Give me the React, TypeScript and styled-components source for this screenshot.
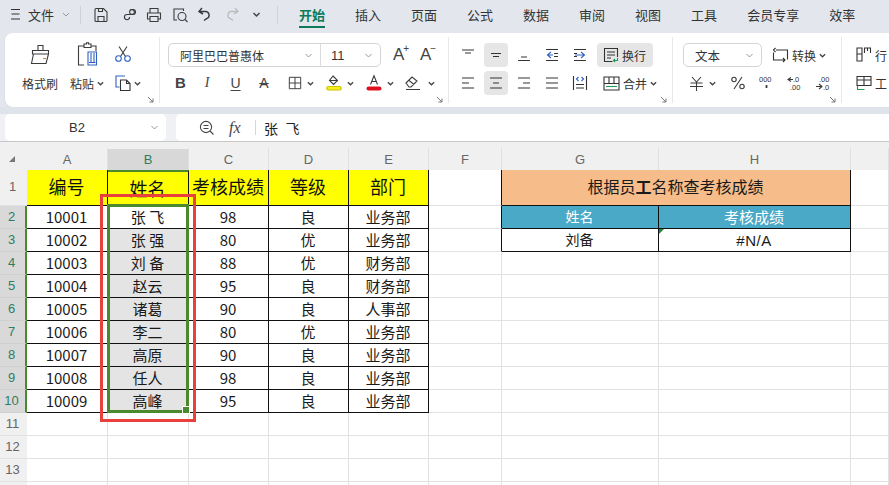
import React from "react";
import styled, { createGlobalStyle } from "styled-components";

const CJK = `"Noto Sans CJK SC", "Noto Sans", sans-serif`;
const GREEN = "#4a8a2c";

const Global = createGlobalStyle`
  html, body { margin: 0; padding: 0; background: #fff; }
  body { font-family: ${CJK}; overflow: hidden; }
`;

const Page = styled.div`
  width: 889px; height: 485px; overflow: hidden; background: #e3e7ed;
  display: flex; flex-direction: column;
`;

/* ---------- top bar ---------- */
const TopBar = styled.div`
  height: 33px; flex: none; display: flex; align-items: center; color: #333; font-size: 13px;
  padding-bottom: 4px; box-sizing: border-box;
`;
const MenuButton = styled.div`
  display: flex; align-items: center; margin-left: 11px; width: 69px; flex: none;
`;
const MenuLabel = styled.span`
  margin-left: 8px; margin-right: 8px; line-height: 1;
`;
const BarDivider = styled.div`
  width: 1px; height: 18px; background: #cfd3d9; flex: none;
`;
const QuickTools = styled.div`
  display: flex; align-items: center; margin-left: 12px;
`;
const QuickSlot = styled.div<{ $w: number; $c?: string }>`
  width: ${p => p.$w}px; display: flex; align-items: center; color: ${p => p.$c || "#3c3c3c"}; flex: none;
`;
const Tabs = styled.div`
  display: flex; gap: 30px; margin-left: 21px; flex: none;
`;
const Tab = styled.div<{ $on?: boolean }>`
  position: relative; line-height: 20px; color: ${p => (p.$on ? "#0f7a58" : "#333")};
  font-weight: ${p => (p.$on ? 700 : 400)}; white-space: nowrap;
  ${p => p.$on && `&::after { content: ""; position: absolute; left: 0; right: 0; bottom: -3px; height: 2px; background: #0f7a58; }`}
`;

/* ---------- ribbon ---------- */
const Ribbon = styled.div`
  height: 74px; flex: none; margin-left: 5px; background: #fff; border-radius: 8px 0 0 8px;
  padding: 4px 0; box-sizing: border-box; display: flex; box-shadow: 0 1px 2px rgba(0,0,0,.08);
`;
const Group = styled.div<{ $w: number; $pl: number; $last?: boolean }>`
  position: relative; width: ${p => p.$w}px; flex: none; box-sizing: border-box; padding: 6px 0 0 ${p => p.$pl}px;
  border-right: ${p => (p.$last ? "none" : "1px solid #e8e8e8")};
  display: flex; flex-direction: column; gap: 4px; overflow: hidden;
`;
const ToolRow = styled.div<{ $gap?: number }>`
  height: 24px; display: flex; align-items: center; gap: ${p => p.$gap || 0}px; color: #3c3c3c; font-size: 12px;
`;
const Corner = styled.svg`
  position: absolute; right: 5px; bottom: 0; width: 7px; height: 7px; stroke: #777; fill: none;
`;
const ClipGrid = styled.div`
  display: grid; grid-template-columns: 46px 48px 34px; grid-template-rows: 24px 24px; row-gap: 4px;
  color: #3c3c3c; font-size: 12px; align-items: center; justify-items: center;
`;
const BigIcon = styled.div<{ $shift?: number }>`
  display: flex; justify-content: center; margin-right: ${p => p.$shift || 0}px; margin-top: -2px;
`;
const ClipLabel = styled.div`
  display: flex; align-items: center; gap: 3px; white-space: nowrap; font-size: 12px; color: #333;
`;
const Tool = styled.div<{ $w: number; $on?: boolean }>`
  width: ${p => p.$w}px; height: 24px; flex: none; display: flex; align-items: center; justify-content: center; gap: 5px;
  border-radius: 4px; background: ${p => (p.$on ? "#e6e6e6" : "transparent")};
`;
const LabeledTool = styled.div<{ $on?: boolean; $ml: number; $w?: number; $pl?: number }>`
  display: flex; align-items: center; gap: 3px; height: 24px; border-radius: 4px;
  margin-left: ${p => p.$ml}px; padding-left: ${p => p.$pl ?? 6}px; width: ${p => (p.$w ? p.$w + "px" : "auto")};
  box-sizing: border-box; white-space: nowrap; background: ${p => (p.$on ? "#e6e6e6" : "transparent")}; color: #333; font-size: 12px;
`;
const SelectBox = styled.div<{ $w: number }>`
  width: ${p => p.$w}px; height: 24px; box-sizing: border-box; border: 1px solid #d4d4d4; border-radius: 5px; flex: none;
  display: flex; align-items: center; color: #333; font-size: 12px;
`;
const SelectPart = styled.div<{ $w: number; $pl: number; $sep?: boolean; $font?: string; $size?: number }>`
  width: ${p => p.$w}px; height: 100%; box-sizing: border-box; padding-left: ${p => p.$pl}px; display: flex; align-items: center;
  justify-content: space-between; padding-right: 7px; flex: none; white-space: nowrap;
  border-right: ${p => (p.$sep ? "1px solid #dcdcdc" : "none")};
  font-family: ${p => p.$font || CJK}; font-size: ${p => p.$size || 12}px;
`;
const FontButton = styled.span`
  display: inline-flex; align-items: flex-start; font-family: "Liberation Sans", sans-serif; font-size: 17px; line-height: 20px; color: #444; width: 15px;
`;
const Sup = styled.span`
  font-size: 10px; line-height: 10px; color: #444; margin-left: -1px; margin-top: -1px; font-weight: 400;
`;
const StyleGlyph = styled.span<{ $kind: "b" | "i" | "u" | "s" }>`
  position: relative; font-size: ${p => (p.$kind === "b" ? 15 : 14)}px; line-height: 16px; color: #444;
  font-family: ${p => (p.$kind === "i" ? `"Liberation Serif", serif` : `"Liberation Sans", sans-serif`)};
  font-weight: ${p => (p.$kind === "b" ? 700 : 400)}; font-style: ${p => (p.$kind === "i" ? "italic" : "normal")};
  text-decoration: ${p => (p.$kind === "u" ? "underline" : p.$kind === "s" ? "line-through" : "none")};
  text-underline-offset: 2px;
`;

/* ---------- formula bar ---------- */
const Strip = styled.div`
  height: 7px; flex: none; background: #dfe3ea;
`;
const FormulaRow = styled.div`
  height: 27px; flex: none; display: flex; gap: 10px; padding-left: 5px; background: #eff1f4; border-bottom: 1px solid #c8c8c8;
`;
const NameBox = styled.div`
  width: 161px; box-sizing: border-box; background: #fff; border-radius: 5px; display: flex; align-items: center; padding: 0 7px 0 64px;
  justify-content: space-between; font-family: "Liberation Sans", sans-serif; font-size: 13px; color: #333; flex: none;
`;
const FormulaBox = styled.div`
  flex: 1; background: #fff; border-radius: 5px 0 0 5px; display: flex; align-items: center; padding-left: 23px; color: #444;
`;
const FxLabel = styled.span`
  font-family: "Liberation Serif", serif; font-style: italic; font-size: 16px; margin-left: 14px; width: 20px; color: #444; line-height: 1;
`;
const FormulaDivider = styled.div`
  width: 1px; height: 15px; background: #d6d6d6; margin: 0 8px 0 6px;
`;
const FormulaText = styled.span`
  font-size: 14px; color: #222; white-space: pre; letter-spacing: .4px;
`;

/* ---------- sheet ---------- */
const SheetWrap = styled.div`
  position: relative; flex: 1; background: #fff; overflow: hidden;
`;
const Sheet = styled.div`
  display: grid;
  grid-template-columns: 27px 81px 81px 80px 80px 80px 73px 157px 192px 38px;
  grid-template-rows: 28px 36px repeat(13, 23px);
`;
const Corner0 = styled.div`
  background: #f0f0f0; display: flex; align-items: center; justify-content: center; padding-top: 6px; box-sizing: border-box;
`;
const Tri = styled.div`
  width: 0; height: 0; border-left: 6px solid transparent; border-bottom: 6px solid #777; margin-left: -3px;
`;
const ColHead = styled.div<{ $on?: boolean }>`
  position: relative; box-sizing: border-box; display: flex; align-items: flex-end; justify-content: center; padding: 0 1px 2px 0;
  font-family: "Liberation Sans", sans-serif; font-size: 13px; line-height: 16px;
  color: ${p => (p.$on ? "#2f7d5d" : "#666")};
  background: ${p => (p.$on ? "linear-gradient(#f0f0f0 7px, #d8d8d8 7px)" : "#f0f0f0")};
  &::after { content: ""; position: absolute; right: 0; top: 6px; bottom: 0; width: 1px; background: #e0e0e0; }
`;
const RowHead = styled.div<{ $on?: boolean }>`
  box-sizing: border-box; display: flex; align-items: center; justify-content: center; padding: 0 2px 2px 0;
  font-family: "Liberation Sans", sans-serif; font-size: 13px;
  color: ${p => (p.$on ? "#2f7d5d" : "#666")};
  background: ${p => (p.$on ? "#d9d9d9" : "#f0f0f0")};
  border-bottom: 1px solid ${p => (p.$on ? "#d0d0d0" : "#e2e2e2")};
  border-right: ${p => (p.$on ? `2px solid ${GREEN}` : "none")};
`;
type CellProps = { $bg?: string; $fg?: string; $size?: number; $right?: string; $bottom?: string; $span?: number; $top?: string; $latin?: boolean; $pb?: number };
const Cell = styled.div<CellProps>`
  position: relative; box-sizing: border-box; display: flex; align-items: center; justify-content: center; white-space: pre; overflow: hidden;
  grid-column: span ${p => p.$span || 1};
  padding: 0 1px ${p => p.$pb ?? 2}px 0;
  font-family: ${p => (p.$latin ? `"Liberation Sans", sans-serif` : CJK)};
  letter-spacing: ${p => (p.$latin ? ".5px" : "0")};
  background: ${p => p.$bg || "#fff"}; color: ${p => p.$fg || "#1a1a1a"}; font-size: ${p => p.$size || 15}px;
  border-right: 1px solid ${p => p.$right || "#e2e2e2"}; border-bottom: 1px solid ${p => p.$bottom || "#e2e2e2"};
  ${p => p.$top ? `border-top: 2px solid ${p.$top};` : ""}
`;
const BoldChar = styled.b`
  font-weight: 700;
`;
const ErrorMark = styled.span`
  position: absolute; left: 0; top: 0; width: 0; height: 0; border-top: 5px solid #1f8a3a; border-right: 5px solid transparent;
`;
const Selection = styled.div`
  position: absolute; left: 107px; top: 62px; width: 82px; height: 209px; box-sizing: border-box; border: 3px solid ${GREEN}; pointer-events: none;
`;
const Handle = styled.div`
  position: absolute; right: -3px; bottom: -3px; width: 6px; height: 6px; background: ${GREEN}; outline: 1px solid #fff;
`;
const RedBox = styled.div`
  position: absolute; left: 100px; top: 52px; width: 96px; height: 228px; box-sizing: border-box; border: 3px solid #e8403a; pointer-events: none;
`;

/* ---------- icons ---------- */
const Svg = styled.svg`
  display: block; flex: none; fill: none; stroke: currentColor; stroke-width: 1.1; overflow: visible;
`;
const Chev = ({ w = 8, soft = false }: { w?: number; soft?: boolean }) => (
  <Svg width={w} height={5} viewBox="0 0 8 5">
    <path d="M1 1l3 3 3-3" stroke={soft ? "#999" : "#444"} strokeWidth={soft ? 1 : 1.5} />
  </Svg>
);
const I16 = ({ children, s = 16 }: { children: React.ReactNode; s?: number }) => (
  <Svg width={s} height={s} viewBox="0 0 16 16">{children}</Svg>
);
const Lines = ({ d, blue }: { d: string; blue?: string }) => (
  <I16><path d={d} stroke="#333" />{blue && <path d={blue} stroke="#2f62c0" />}</I16>
);
const CornerMark = () => (
  <Corner viewBox="0 0 7 7"><path d="M1 1l5 5M6 2.5V6H2.5" /></Corner>
);
const SmallNum = styled.text`
  font-family: "Liberation Sans", sans-serif; font-size: 7.5px; fill: #333; stroke: none;
`;

const rows = [
  ["10001", "张 飞", "98", "良", "业务部"],
  ["10002", "张 强", "80", "优", "业务部"],
  ["10003", "刘 备", "88", "优", "财务部"],
  ["10004", "赵云", "95", "良", "财务部"],
  ["10005", "诸葛", "90", "良", "人事部"],
  ["10006", "李二", "80", "优", "业务部"],
  ["10007", "高原", "90", "良", "业务部"],
  ["10008", "任人", "98", "良", "业务部"],
  ["10009", "高峰", "95", "良", "业务部"],
];
const heads = ["编号", "姓名", "考核成绩", "等级", "部门"];
const cols = ["A", "B", "C", "D", "E", "F", "G", "H", ""];
const tabs = ["插入", "页面", "公式", "数据", "审阅", "视图", "工具", "会员专享", "效率"];
const BLACK = "#111";

function SheetRows() {
  const out: React.ReactNode[] = [];
  for (let r = 1; r <= 14; r++) {
    const sel = r >= 2 && r <= 10;
    out.push(<RowHead key={`h${r}`} $on={sel}>{r < 14 ? r : ""}</RowHead>);
    if (r === 1) {
      heads.forEach((h, i) => (
        out.push(<Cell key={`t${i}`} $bg="#ffff00" $fg="#111" $size={18} $pb={i === 1 ? 2 : 4} $right={BLACK} $bottom={BLACK} $top={i === 1 ? GREEN : undefined}>{h}</Cell>)
      ));
    } else if (sel) {
      rows[r - 2].forEach((v, i) => (
        out.push(<Cell key={`${r}-${i}`} $bg={i === 1 && r > 2 ? "#e4e4e4" : "#fff"} $right={BLACK} $bottom={BLACK}>{v}</Cell>)
      ));
    } else {
      for (let i = 0; i < 5; i++) out.push(<Cell key={`${r}-${i}`} />);
    }
    out.push(<Cell key={`f${r}`} $right={r <= 3 ? BLACK : undefined} />);
    if (r === 1) {
      out.push(<Cell key="title" $span={2} $bg="#f6bd8a" $size={16} $pb={4} $right={BLACK} $bottom={BLACK}>根据员<BoldChar>工</BoldChar>名称查考核成绩</Cell>);
    } else if (r === 2) {
      out.push(<Cell key="g2" $bg="#4aa9c6" $fg="#fff" $size={14} $right={BLACK} $bottom={BLACK}>姓名</Cell>);
      out.push(<Cell key="h2" $bg="#4aa9c6" $fg="#fff" $size={15} $right={BLACK} $bottom={BLACK}>考核成绩</Cell>);
    } else if (r === 3) {
      out.push(<Cell key="g3" $size={14} $right={BLACK} $bottom={BLACK}>刘备</Cell>);
      out.push(<Cell key="h3" $size={15} $pb={0} $latin $right={BLACK} $bottom={BLACK}><ErrorMark />#N/A</Cell>);
    } else {
      out.push(<Cell key={`g${r}`} />);
      out.push(<Cell key={`hh${r}`} />);
    }
    out.push(<Cell key={`i${r}`} />);
  }
  return <>{out}</>;
}

export default function App() {
  return (
    <Page>
      <Global />
      <TopBar>
        <MenuButton>
          <Svg width={9} height={11} viewBox="0 0 9 11" stroke="#333"><path d="M0 .5h9M.5 5h8M0 10h9" /></Svg>
          <MenuLabel>文件</MenuLabel>
          <Chev soft />
        </MenuButton>
        <BarDivider />
        <QuickTools>
          <QuickSlot $w={29}><I16><path d="M3 1.5h7.5L14 5v8.5a1 1 0 0 1-1 1H3a1 1 0 0 1-1-1v-11a1 1 0 0 1 1-1zM5 14.5V9.5h6v5M5.5 1.5v3h4v-3" /></I16></QuickSlot>
          <QuickSlot $w={24}><I16><path d="M8.5 2.5h2.5a2.5 2.5 0 0 1 0 5H5a2.6 2.6 0 0 0 0 5.2c1.5 0 2.6-1 2.6-2.6" /><circle cx="10" cy="5" r="2.4" /></I16></QuickSlot>
          <QuickSlot $w={26}><I16><path d="M4 6V1.5h8V6M4 12H1.5V6h13v6H12M4 9.5h8v5H4z" /></I16></QuickSlot>
          <QuickSlot $w={25}><I16><path d="M6 2H2v11h3M2 2h9.5v2" /><circle cx="10" cy="9.5" r="4" /><path d="M13 12.5l2.5 2.5" /></I16></QuickSlot>
          <QuickSlot $w={29}><Svg width={14} height={15} viewBox="0 0 14 15"><path strokeWidth={1.5} d="M5 1L2 4.5 6 7M2.5 4.5H8a3.7 3.7 0 0 1 1.5 7.2L7 13.5" /></Svg></QuickSlot>
          <QuickSlot $w={25} $c="#bcbcbc"><Svg width={14} height={15} viewBox="0 0 14 15"><path strokeWidth={1.3} d="M9 1l3 3.5-4 2.5M11.5 4.5H6a3.7 3.7 0 0 0-1.5 7.2L7 13.5" /></Svg></QuickSlot>
          <QuickSlot $w={26}><Chev w={11} /></QuickSlot>
        </QuickTools>
        <BarDivider />
        <Tabs>
          <Tab $on>开始</Tab>
          {tabs.map(t => <Tab key={t}>{t}</Tab>)}
        </Tabs>
      </TopBar>

      <Ribbon>
        <Group $w={155} $pl={12}>
          <ClipGrid>
            <BigIcon>
              <Svg width={21} height={21} viewBox="0 0 21 21"><path d="M8 6V1.5h5V6M2.5 6.5h16V10h-16zM3.5 10L1.5 19.5h14.5l2.5-9.5" /><path d="M13 14.5h3" stroke="#d9862a" /></Svg>
            </BigIcon>
            <BigIcon>
              <Svg width={21} height={25} viewBox="0 0 21 25"><path d="M7 4H1.5v19H7M14 4h5v5M7 4V2h2.5V.8h2V2H14v3.5H7z" /><path d="M11 10h8.5v13H11zM12 20.5h6.5M14 11v9M17 11v9" stroke="#2f62c0" /></Svg>
            </BigIcon>
            <BigIcon $shift={10}>
              <Svg width={16} height={16} viewBox="0 0 16 16"><path d="M5.5 10.5L12 .5M10.5 10.5L4 .5" /><circle cx="3.5" cy="12.5" r="2.8" stroke="#2f62c0" /><circle cx="12.5" cy="12.5" r="2.8" stroke="#2f62c0" /></Svg>
            </BigIcon>
            <ClipLabel>格式刷</ClipLabel>
            <ClipLabel>粘贴<Chev w={7} /></ClipLabel>
            <ClipLabel>
              <Svg width={16} height={16} viewBox="0 0 16 16"><path d="M6 1H1v11h3.5M6 1h4" stroke="#2f62c0" /><path d="M5.5 5h6l3.5 3.5V15.5H5.5zM11.5 5v3.5H15" /></Svg>
              <Chev w={7} />
            </ClipLabel>
          </ClipGrid>
          <CornerMark />
        </Group>

        <Group $w={289} $pl={8}>
          <ToolRow $gap={12}>
            <SelectBox $w={213}>
              <SelectPart $w={152} $pl={11} $sep>阿里巴巴普惠体<Chev w={9} soft /></SelectPart>
              <SelectPart $w={59} $pl={10} $size={13} $font={`"Liberation Sans", sans-serif`}>11<Chev w={9} soft /></SelectPart>
            </SelectBox>
            <FontButton>A<Sup>+</Sup></FontButton>
            <FontButton>A<Sup>−</Sup></FontButton>
          </ToolRow>
          <ToolRow>
            <Tool $w={25}><StyleGlyph $kind="b">B</StyleGlyph></Tool>
            <Tool $w={28}><StyleGlyph $kind="i">I</StyleGlyph></Tool>
            <Tool $w={29}><StyleGlyph $kind="u">U</StyleGlyph></Tool>
            <Tool $w={28}><StyleGlyph $kind="s">A</StyleGlyph></Tool>
            <Tool $w={46}><I16 s={14}><path d="M1.5 1.5h13v13h-13zM8 1.5v13M1.5 8h13" /></I16><Chev w={7} /></Tool>
            <Tool $w={32}>
              <Svg width={16} height={16} viewBox="0 0 16 16"><path d="M7 1l4.5 4.5L7.5 9.5 3.5 5.5zM3.5 5.5h8" /><rect x=".7" y="11.5" width="14.6" height="3.5" rx="1.7" fill="#f5ee1e" stroke="#cfc200" /></Svg>
              <Chev w={7} />
            </Tool>
            <Tool $w={48}>
              <Svg width={16} height={16} viewBox="0 0 16 16"><path d="M4.5 9.5L8 .8l3.5 8.7M5.7 6.5h4.6" /><rect x=".5" y="11.5" width="15" height="4" rx="2" fill="#e0101e" stroke="none" /></Svg>
              <Chev w={7} />
            </Tool>
            <Tool $w={32}>
              <Svg width={18} height={16} viewBox="0 0 18 16"><path d="M1 8l6-6 5 4-6 6H4zM4 5.3L9 9.5M1 14.5h14" /></Svg>
              <Chev w={7} />
            </Tool>
          </ToolRow>
          <CornerMark />
        </Group>

        <Group $w={224} $pl={7}>
          <ToolRow $gap={4}>
            <Tool $w={24}><Lines d="M2 3h12M5 6h6" /></Tool>
            <Tool $w={24} $on><Lines d="M3 6.5h10M5 9.5h6" /></Tool>
            <Tool $w={24}><Lines d="M5 10h6M2 13.5h12" /></Tool>
            <Tool $w={24}><Lines d="M2 2.5h12M2 13.5h12M10 6.5h4M10 9.5h4" blue="M7 5L3.5 8 7 11M3.5 8H9" /></Tool>
            <Tool $w={24}><Lines d="M2 2.5h12M2 13.5h12M2 6.5h3M2 9.5h3" blue="M9 5l3.5 3L9 11M3 8h9" /></Tool>
            <LabeledTool $on $ml={1} $w={56}>
              <I16><path d="M14.5 10V1.5h-13v13h8M4 5h8M4 8h8M4 11h4" /><path d="M14.5 11v2.5H10.5M12 12l-1.5 1.5L12 15" stroke="#1f9a5a" /></I16>
              换行
            </LabeledTool>
          </ToolRow>
          <ToolRow $gap={4}>
            <Tool $w={24}><Lines d="M2 3h12M2 8h7M2 13h12" /></Tool>
            <Tool $w={24} $on><Lines d="M2 3h12M5 8h6M2 13h12" /></Tool>
            <Tool $w={24}><Lines d="M2 3h12M7 8h7M2 13h12" /></Tool>
            <Tool $w={24}><Lines d="M2 3h12M2 8h12M2 13h12" /></Tool>
            <Tool $w={24}><Lines d="M1.5 1v14M14.5 1v14M4 9.5h8M4 13h8" blue="M6.5 2L4.5 4l2 2M9.5 2l2 2-2 2" /></Tool>
            <LabeledTool $ml={1} $w={64}>
              <Svg width={17} height={15} viewBox="0 0 17 15"><path d="M1 1h15v13H1zM1 7.5h15M6 1v6.5M11 1v6.5" /><path d="M3 10.5h11" stroke="#1f9a5a" /></Svg>
              合并
              <Chev w={7} />
            </LabeledTool>
          </ToolRow>
          <CornerMark />
        </Group>

        <Group $w={169} $pl={10}>
          <ToolRow>
            <SelectBox $w={79}><SelectPart $w={77} $pl={11} $size={12.5}>文本<Chev w={9} soft /></SelectPart></SelectBox>
            <LabeledTool $ml={10} $pl={0}>
              <Svg width={17} height={16} viewBox="0 0 17 16"><path d="M4 3h11.5v9.5M1.5 5.5V13H13M3.5 1L1.5 3l2 2M11 11l2 2-2 2" /></Svg>
              转换
              <Chev w={7} />
            </LabeledTool>
          </ToolRow>
          <ToolRow>
            <Tool $w={39}><Svg width={15} height={15} viewBox="0 0 15 15"><path d="M3 1l4.5 5L12 1M1.5 7h12M1 10.5h13M7.5 6v9" /></Svg><Chev w={7} /></Tool>
            <Tool $w={31}><Svg width={14} height={14} viewBox="0 0 14 14"><path d="M11 1L3 13" /><circle cx="3" cy="3.5" r="2.2" /><circle cx="11" cy="10.5" r="2.2" /></Svg></Tool>
            <Tool $w={27}><Svg width={15} height={14} viewBox="0 0 15 14"><SmallNum x="0" y="6">000</SmallNum><path d="M7.5 9v3" strokeWidth={1.8} /></Svg></Tool>
            <Tool $w={28}><Svg width={15} height={14} viewBox="0 0 15 14"><SmallNum x="6" y="6">.0</SmallNum><SmallNum x="3" y="13.5">.00</SmallNum><path d="M4 1.5L1 3.5l3 2M1 3.5h5" /></Svg></Tool>
            <Tool $w={30}><Svg width={15} height={14} viewBox="0 0 15 14"><SmallNum x="3" y="6">.00</SmallNum><SmallNum x="7" y="13.5">.0</SmallNum><path d="M3 8l3 2.5-3 2.5M0 10.5h6" /></Svg></Tool>
          </ToolRow>
          <CornerMark />
        </Group>

        <Group $w={47} $pl={14} $last>
          <ToolRow>
            <LabeledTool $ml={0} $pl={0}>
              <Svg width={16} height={16} viewBox="0 0 16 16"><path d="M1 1h5v6H1zM1 7h5v7H1zM8.5 6V1h6v5M11.5 1v3" /></Svg>
              <span>行</span>
            </LabeledTool>
          </ToolRow>
          <ToolRow>
            <LabeledTool $ml={0} $pl={0}>
              <Svg width={16} height={16} viewBox="0 0 16 16"><path d="M1 1.5h14v9H1zM1 5h14M8 1.5V10.5M1 5v6" /><path d="M1.5 11v3.5h7" stroke="#1f9a5a" /></Svg>
              <span>工</span>
            </LabeledTool>
          </ToolRow>
        </Group>
      </Ribbon>

      <Strip />
      <FormulaRow>
        <NameBox>B2<Chev w={9} soft /></NameBox>
        <FormulaBox>
          <I16>
            <circle cx="7" cy="7" r="5.6" />
            <path d="M11 11l3.5 3.5M4.5 5.5h5M4.5 8.5h5" />
          </I16>
          <FxLabel>fx</FxLabel>
          <FormulaDivider />
          <FormulaText>张  飞</FormulaText>
        </FormulaBox>
      </FormulaRow>

      <SheetWrap>
        <Sheet>
          <Corner0><Tri /></Corner0>
          {cols.map((c, i) => <ColHead key={i} $on={c === "B"}>{c}</ColHead>)}
          <SheetRows />
        </Sheet>
        <RedBox />
        <Selection><Handle /></Selection>
      </SheetWrap>
    </Page>
  );
}
